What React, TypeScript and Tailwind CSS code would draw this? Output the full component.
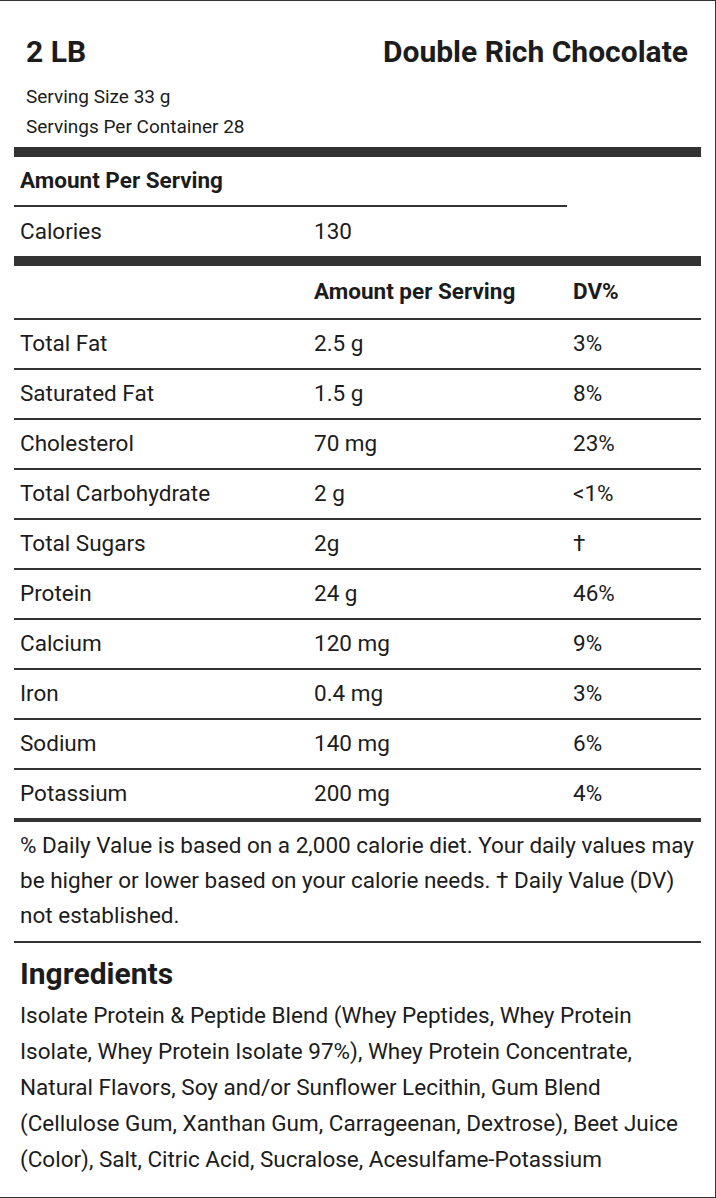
import React from "react";

// ── Data ───────────────────────────────────────────────────────────────────

const NUTRIENTS: [string, string, string][] = [
  ["Total Fat", "2.5 g", "3%"],
  ["Saturated Fat", "1.5 g", "8%"],
  ["Cholesterol", "70 mg", "23%"],
  ["Total Carbohydrate", "2 g", "<1%"],
  ["Total Sugars", "2g", "†"],
  ["Protein", "24 g", "46%"],
  ["Calcium", "120 mg", "9%"],
  ["Iron", "0.4 mg", "3%"],
  ["Sodium", "140 mg", "6%"],
  ["Potassium", "200 mg", "4%"],
];

const FONT = { fontFamily: "Roboto, 'Noto Sans', sans-serif" };

export default function App() {
  return (
    <div
      className="w-[716px] h-[1198px] bg-white border-t border-r border-b border-[#333] text-[#1c1c1c] overflow-hidden"
      style={FONT}
    >
      {/* Header */}
      <div className="pt-[33px] pl-[26px] pr-[27px] flex items-center justify-between h-[36px] box-content">
        <div className="text-[30px] font-bold leading-[36px]">2 LB</div>
        <div className="text-[30px] font-bold leading-[36px]">Double Rich Chocolate</div>
      </div>
      <div className="pl-[26px] mt-[12px] text-[19px] leading-[30px]">
        <div>Serving Size 33 g</div>
        <div>Servings Per Container 28</div>
      </div>

      <div className="px-[14px] mt-[5px]">
        <div className="h-[10px] bg-[#333]" />

        {/* Calories block */}
        <div className="h-[48px] flex items-center pl-[6px] text-[22.5px] font-bold">
          Amount Per Serving
        </div>
        <div className="h-[2px] w-[553px] bg-[#333]" />
        <div className="h-[49px] flex items-center pl-[6px] text-[22.5px]">
          <span className="w-[294px]">Calories</span>
          <span>130</span>
        </div>
        <div className="h-[10px] bg-[#333]" />

        {/* Table header */}
        <div className="h-[52px] flex items-center pl-[6px] text-[22.5px] font-bold">
          <span className="w-[294px]" />
          <span className="w-[259px]">Amount per Serving</span>
          <span>DV%</span>
        </div>
        <div className="h-[2px] bg-[#333]" />

        {/* Nutrient rows */}
        {NUTRIENTS.map(([name, amount, dv], i) => (
          <div key={name}>
            <div className="h-[48px] flex items-center pl-[6px] text-[22.5px]">
              <span className="w-[294px]">{name}</span>
              <span className="w-[259px]">{amount}</span>
              <span>{dv}</span>
            </div>
            <div className={i === NUTRIENTS.length - 1 ? "h-[4px] bg-[#333]" : "h-[2px] bg-[#333]"} />
          </div>
        ))}

        {/* Footnote */}
        <p className="pl-[6px] pt-[6px] pb-[8px] text-[22.5px] leading-[35px] whitespace-nowrap">
          % Daily Value is based on a 2,000 calorie diet. Your daily values may
          <br />
          be higher or lower based on your calorie needs. † Daily Value (DV)
          <br />
          not established.
        </p>
        <div className="h-[2px] bg-[#333]" />

        {/* Ingredients */}
        <h2 className="pl-[6px] mt-[13px] text-[30px] font-bold leading-[36px]">Ingredients</h2>
        <p className="pl-[6px] mt-[5px] text-[22.5px] leading-[36px] whitespace-nowrap">
          Isolate Protein &amp; Peptide Blend (Whey Peptides, Whey Protein
          <br />
          Isolate, Whey Protein Isolate 97%), Whey Protein Concentrate,
          <br />
          Natural Flavors, Soy and/or Sunflower Lecithin, Gum Blend
          <br />
          (Cellulose Gum, Xanthan Gum, Carrageenan, Dextrose), Beet Juice
          <br />
          (Color), Salt, Citric Acid, Sucralose, Acesulfame-Potassium
        </p>
      </div>
    </div>
  );
}
